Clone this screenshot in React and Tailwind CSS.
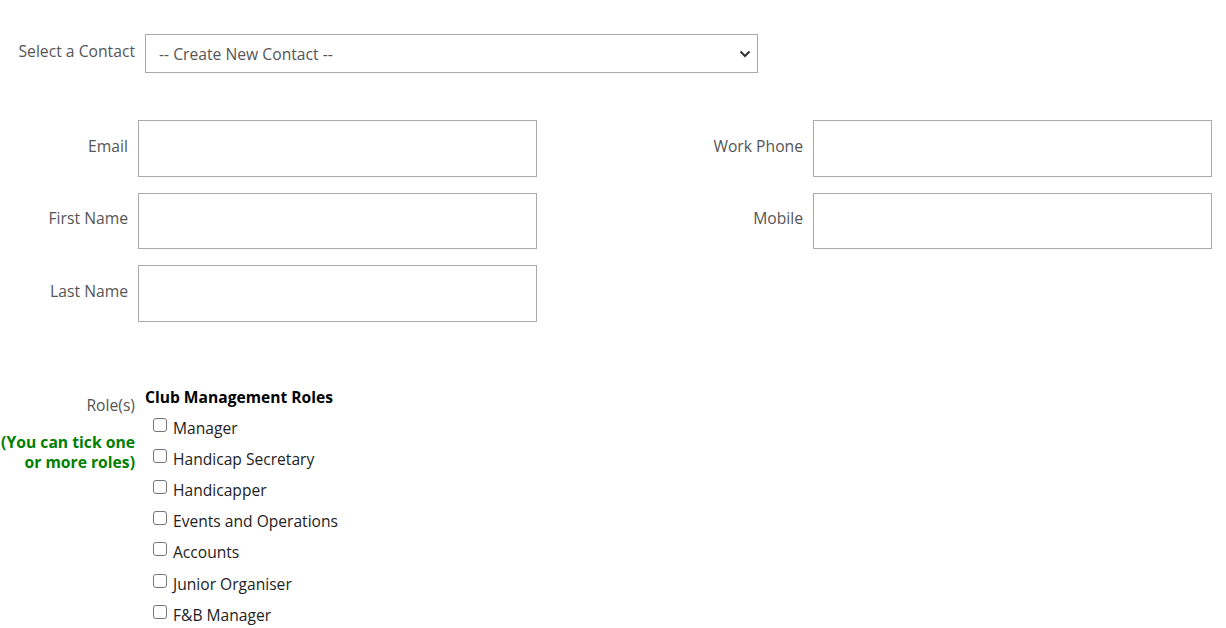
import React from "react";

const font = { fontFamily: '"Open Sans", sans-serif' };

function Field({ label, h = "h-[57px]" }) {
  return (
    <div className="flex items-center">
      <label className="-mt-[4px] w-[128px] shrink-0 text-right text-[15.7px] text-[#555]">{label}</label>
      <div className={`ml-[10px] ${h} w-[399px] border border-[#aaa] bg-white`} />
    </div>
  );
}

const roles = [
  "Manager",
  "Handicap Secretary",
  "Handicapper",
  "Events and Operations",
  "Accounts",
  "Junior Organiser",
  "F&B Manager",
];

export default function App() {
  return (
    <div className="min-h-[628px] bg-white" style={font}>
      <div className="flex items-center pt-[34px]">
        <label className="-mt-[4px] w-[135px] text-right text-[15.7px] text-[#555]">Select a Contact</label>
        <div className="ml-[10px] flex h-[39px] w-[613px] items-center justify-between border border-[#aaa] bg-white pl-[13px] pr-[6px]">
          <span className="mt-[2px] text-[15.7px] text-[#555]">-- Create New Contact --</span>
          <svg width="12" height="8" viewBox="0 0 12 8">
            <path d="M1.5 1.5 L6 6 L10.5 1.5" fill="none" stroke="#333" strokeWidth="2" />
          </svg>
        </div>
      </div>

      <div className="mt-[47px] grid grid-cols-[537px_537px] gap-x-[138px]">
        <div className="flex flex-col gap-[16px]">
          <Field label="Email" />
          <Field label="First Name" h="h-[56px]" />
          <Field label="Last Name" />
        </div>
        <div className="flex flex-col gap-[16px]">
          <Field label="Work Phone" />
          <Field label="Mobile" h="h-[56px]" />
        </div>
      </div>

      <div className="mt-[65px] flex">
        <div className="w-[135px] text-right">
          <div className="mt-[8px] text-[15.7px] leading-[20px] text-[#555]">Role(s)</div>
          <div className="mt-[17px] text-[15.7px] font-bold leading-[20px] text-[#008000]">
            (You can tick one
            <br />
            or more roles)
          </div>
        </div>
        <div className="ml-[10px]">
          <div className="text-[15.6px] font-bold leading-[20px] text-black">Club Management Roles</div>
          <div className="mt-[5px] flex flex-col">
            {roles.map((r) => (
              <div key={r} className="flex h-[31.2px] items-center">
                <span className="ml-[8px] -mt-[6px] box-border h-[14px] w-[14px] rounded-[3px] border border-[#767676] bg-white" />
                <span className="ml-[6px] text-[15.6px] leading-[20px] text-[#222]">{r}</span>
              </div>
            ))}
          </div>
        </div>
      </div>
    </div>
  );
}
